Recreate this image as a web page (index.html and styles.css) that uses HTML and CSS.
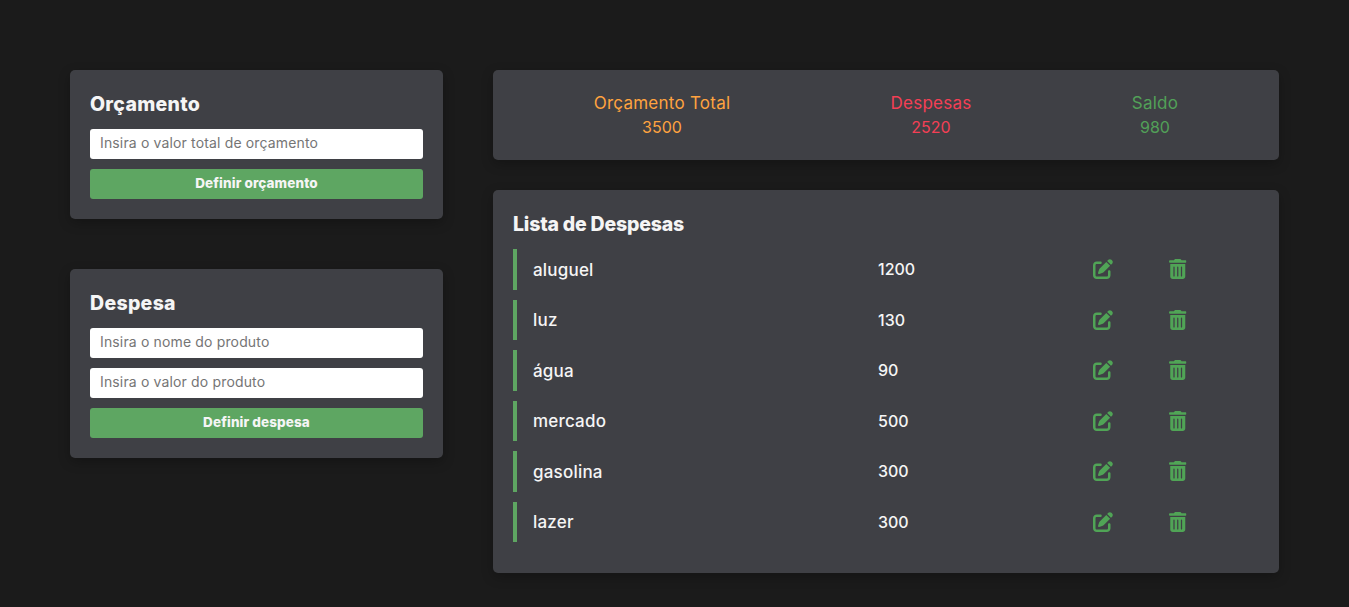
FILE: index.html
```html
<!DOCTYPE html>
<html lang="pt">
<head>
<meta charset="utf-8">
<title>Orçamento</title>
<link rel="stylesheet" href="styles.css">
</head>
<body>
<svg class="defs" width="0" height="0" aria-hidden="true">
  <symbol id="i-edit" viewBox="0 0 512 512"><path d="M471.6 21.7c-21.9-21.9-57.3-21.9-79.2 0L362.3 51.7l97.9 97.9 30.1-30.1c21.9-21.9 21.9-57.3 0-79.2L471.6 21.7zm-299.2 220c-6.1 6.1-10.8 13.6-13.5 21.9l-29.6 88.8c-2.9 8.6-.6 18.1 5.8 24.6s15.9 8.7 24.6 5.8l88.8-29.6c8.2-2.7 15.7-7.4 21.9-13.5L437.7 172.3 339.7 74.3 172.4 241.7zM96 64C43 64 0 107 0 160V416c0 53 43 96 96 96H352c53 0 96-43 96-96V320c0-17.7-14.3-32-32-32s-32 14.3-32 32v96c0 17.7-14.3 32-32 32H96c-17.7 0-32-14.3-32-32V160c0-17.7 14.3-32 32-32h96c17.7 0 32-14.3 32-32s-14.3-32-32-32H96z"/></symbol>
  <symbol id="i-trash" viewBox="0 0 448 512"><path d="M135.2 17.7C140.6 6.8 151.7 0 163.8 0H284.2c12.1 0 23.2 6.8 28.6 17.7L320 32h96c17.7 0 32 14.3 32 32s-14.3 32-32 32H32C14.3 96 0 81.7 0 64S14.3 32 32 32h96l7.2-14.3zM32 128H416V448c0 35.3-28.7 64-64 64H96c-35.3 0-64-28.7-64-64V128zm96 64c-8.8 0-16 7.2-16 16V432c0 8.8 7.2 16 16 16s16-7.2 16-16V208c0-8.8-7.2-16-16-16zm96 0c-8.8 0-16 7.2-16 16V432c0 8.8 7.2 16 16 16s16-7.2 16-16V208c0-8.8-7.2-16-16-16zm96 0c-8.8 0-16 7.2-16 16V432c0 8.8 7.2 16 16 16s16-7.2 16-16V208c0-8.8-7.2-16-16-16z"/></symbol>
</svg>
<main class="layout">
  <section class="forms">
    <form class="card form-card">
      <h2 class="card-title form-title">Orçamento</h2>
      <input class="field" type="text" placeholder="Insira o valor total de orçamento">
      <button class="submit" type="button">Definir orçamento</button>
    </form>
    <form class="card form-card">
      <h2 class="card-title form-title">Despesa</h2>
      <input class="field" type="text" placeholder="Insira o nome do produto">
      <input class="field" type="text" placeholder="Insira o valor do produto">
      <button class="submit" type="button">Definir despesa</button>
    </form>
  </section>
  <section class="results">
    <div class="card summary">
      <div class="stat stat-total"><span class="stat-label">Orçamento Total</span><span>3500</span></div>
      <div class="stat stat-spent"><span class="stat-label">Despesas</span><span>2520</span></div>
      <div class="stat stat-left"><span class="stat-label">Saldo</span><span>980</span></div>
    </div>
    <div class="card list-card">
      <h2 class="card-title list-title">Lista de Despesas</h2>
      <ul class="list">
        <li class="row"><span class="row-name">aluguel</span><span>1200</span><svg class="icon icon-edit"><use href="#i-edit"/></svg><svg class="icon icon-trash"><use href="#i-trash"/></svg></li>
        <li class="row"><span class="row-name">luz</span><span>130</span><svg class="icon icon-edit"><use href="#i-edit"/></svg><svg class="icon icon-trash"><use href="#i-trash"/></svg></li>
        <li class="row"><span class="row-name">água</span><span>90</span><svg class="icon icon-edit"><use href="#i-edit"/></svg><svg class="icon icon-trash"><use href="#i-trash"/></svg></li>
        <li class="row"><span class="row-name">mercado</span><span>500</span><svg class="icon icon-edit"><use href="#i-edit"/></svg><svg class="icon icon-trash"><use href="#i-trash"/></svg></li>
        <li class="row"><span class="row-name">gasolina</span><span>300</span><svg class="icon icon-edit"><use href="#i-edit"/></svg><svg class="icon icon-trash"><use href="#i-trash"/></svg></li>
        <li class="row"><span class="row-name">lazer</span><span>300</span><svg class="icon icon-edit"><use href="#i-edit"/></svg><svg class="icon icon-trash"><use href="#i-trash"/></svg></li>
      </ul>
    </div>
  </section>
</main>
</body>
</html>
```
FILE: styles.css
```css
* { box-sizing: border-box; }
html, body { margin: 0; height: 100%; }
body {
  background: #1b1b1b;
  color: #f5f5f5;
  font-family: Inter, "Open Sans", sans-serif;
  overflow: hidden;
}
.defs { position: absolute; }
.layout {
  display: grid;
  grid-template-columns: 373px 786px;
  gap: 50px;
  padding: 70px 70px 0;
  align-items: start;
}
.forms { display: flex; flex-direction: column; gap: 50px; }
.results { display: flex; flex-direction: column; gap: 30px; }
.card {
  background: #3f4045;
  border-radius: 5px;
  box-shadow: 0 4px 12px rgba(0, 0, 0, .25);
}
.form-card {
  display: flex;
  flex-direction: column;
  gap: 10px;
  padding: 20px;
}
.card-title {
  margin: 0;
  height: 29px;
  line-height: 29px;
  font-size: 19.5px;
  font-weight: 800;
  color: #f5f5f5;
}
.form-title { letter-spacing: .3px; }
.list-title { margin-bottom: 10px; letter-spacing: -.2px; }
.field {
  display: block;
  width: 100%;
  height: 30px;
  border: 0;
  border-radius: 3px;
  padding: 0 10px 4px;
  background: #fff;
  font: 400 14px Inter, sans-serif;
  letter-spacing: .15px;
  outline: none;
}
.field::placeholder { color: #757575; opacity: 1; }
.submit {
  height: 30px;
  border: 0;
  border-radius: 3px;
  padding: 0 0 2px;
  background: #5ea662;
  color: #f5f5f5;
  font: 800 13.5px Inter, sans-serif;
  letter-spacing: .1px;
}
.summary {
  display: grid;
  grid-template-columns: 338px 200px 248px;
  height: 90px;
  align-items: center;
  padding-bottom: 1px;
}
.stat {
  display: flex;
  flex-direction: column;
  align-items: center;
  font-size: 16px;
  line-height: 24px;
}
.stat-label { font-size: 17px; letter-spacing: .25px; }
.stat-total { color: #ffa33f; }
.stat-spent { color: #f43f55; }
.stat-left { color: #52a058; }
.list-card { padding: 20px 20px 30px; height: 383px; }
.list { list-style: none; margin: 0; padding: 0; }
.row {
  display: grid;
  grid-template-columns: 345px 215px 76px 1fr;
  align-items: center;
  height: 40.5px;
  margin-bottom: 10px;
  padding-left: 16px;
  border-left: 4px solid #5ea662;
  font-size: 16px;
  font-weight: 500;
  color: #f5f5f5;
}
.row-name { padding-top: 1px; font-size: 17px; letter-spacing: .2px; }
.icon { display: block; height: 20px; fill: #50a456; margin-top: -.5px; }
.icon-edit { width: 20px; }
.icon-trash { width: 17.5px; }
```
